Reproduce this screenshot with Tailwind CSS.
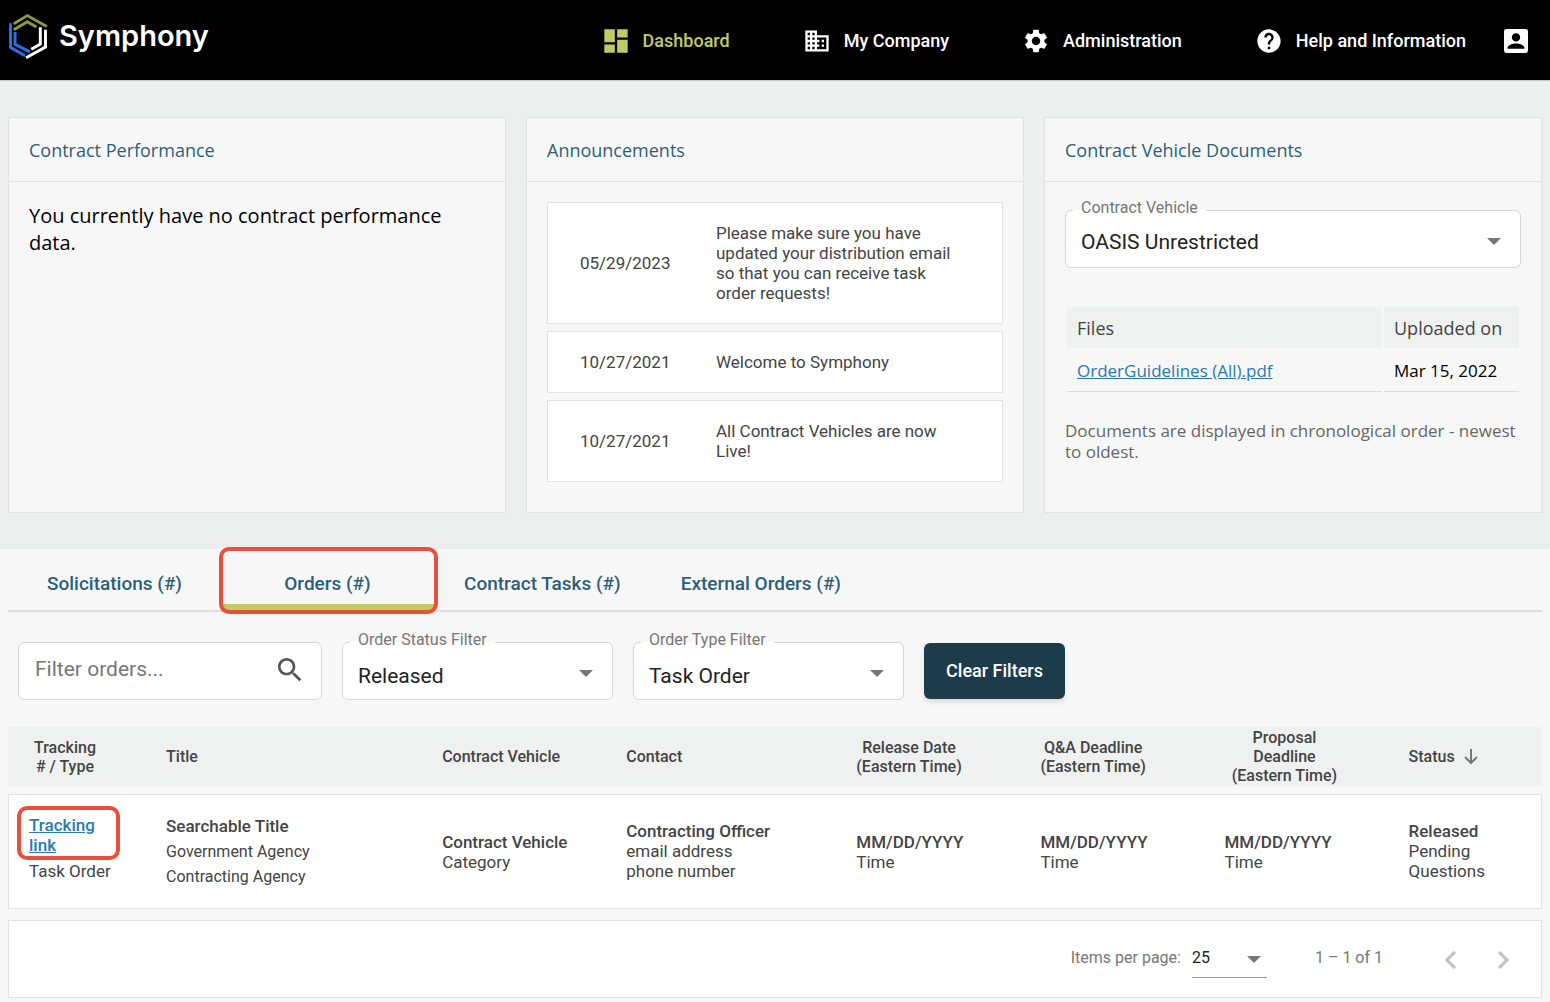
<!DOCTYPE html>
<html lang="en">
<head>
  <meta charset="UTF-8" />
  <meta name="viewport" content="width=device-width, initial-scale=1.0" />
  <title>Symphony — Dashboard</title>
  <script src="https://cdn.jsdelivr.net/npm/@tailwindcss/browser@4"></script>
</head>
<body class="bg-[#f7f7f7] text-[#444] font-['Roboto',sans-serif] text-base leading-5 min-h-screen">

  <header class="bg-black text-white h-[81px] border-b border-[#c4c4c4] flex items-center justify-between pl-2 pr-[22px]">
    <a href="#" class="flex items-center gap-[11px] -mt-2">
      <svg class="w-10 h-[46px]" viewBox="22 40 120 142" fill="none" stroke-width="9">
        <path stroke="#8a9a3c" d="M38 73 80 48l60 34M38 92l42-25 28 16" />
        <path stroke="#2671e8" d="M28 72v74l45 26M42 99v38l46 23" />
        <path stroke="#fff" d="M136 92v53l-60 33M120 84v52l-28 16" />
      </svg>
      <span class="font-['Inter',sans-serif] font-semibold text-[29px] leading-8">Symphony</span>
    </a>
    <nav class="flex items-center pt-[2px] text-lg font-medium">
      <a href="#" class="flex items-center gap-[13px] text-[#c1cb66] mr-[73px]">
        <svg class="size-7" viewBox="0 0 24 24" fill="currentColor"><path d="M2 2h9v11H2zM13 2h9v7h-9zM13 11h9v11h-9zM2 15h9v7H2z" /></svg>
        Dashboard
      </a>
      <a href="#" class="flex items-center gap-[13px] mr-[73px]">
        <svg class="size-7" viewBox="0 0 24 24" fill="currentColor"><path d="M12 7V3H2v18h20V7H12zM6 19H4v-2h2v2zm0-4H4v-2h2v2zm0-4H4V9h2v2zm0-4H4V5h2v2zm4 12H8v-2h2v2zm0-4H8v-2h2v2zm0-4H8V9h2v2zm0-4H8V5h2v2zm10 12h-8v-2h2v-2h-2v-2h2v-2h-2V9h8v10zm-2-8h-2v2h2v-2zm0 4h-2v2h2v-2z" /></svg>
        My Company
      </a>
      <a href="#" class="flex items-center gap-[13px] mr-[73px]">
        <svg class="size-7" viewBox="0 0 24 24" fill="currentColor"><path d="M19.14 12.94c.04-.3.06-.61.06-.94 0-.32-.02-.64-.07-.94l2.03-1.58c.18-.14.23-.41.12-.61l-1.92-3.32c-.12-.22-.37-.29-.59-.22l-2.39.96c-.5-.38-1.03-.7-1.62-.94l-.36-2.54c-.04-.24-.24-.41-.48-.41h-3.84c-.24 0-.43.17-.47.41l-.36 2.54c-.59.24-1.13.57-1.62.94l-2.39-.96c-.22-.08-.47 0-.59.22L2.74 8.87c-.12.21-.08.47.12.61l2.03 1.58c-.05.3-.09.63-.09.94s.02.64.07.94l-2.03 1.58c-.18.14-.23.41-.12.61l1.92 3.32c.12.22.37.29.59.22l2.39-.96c.5.38 1.03.7 1.62.94l.36 2.54c.05.24.24.41.48.41h3.84c.24 0 .44-.17.47-.41l.36-2.54c.59-.24 1.13-.56 1.62-.94l2.39.96c.22.08.47 0 .59-.22l1.92-3.32c.12-.22.07-.47-.12-.61l-2.01-1.58zM12 15.6c-1.98 0-3.6-1.62-3.6-3.6s1.62-3.6 3.6-3.6 3.6 1.62 3.6 3.6-1.62 3.6-3.6 3.6z" /></svg>
        Administration
      </a>
      <a href="#" class="flex items-center gap-[13px] mr-[38px]">
        <svg class="size-7" viewBox="0 0 24 24" fill="currentColor"><path d="M12 2C6.48 2 2 6.48 2 12s4.48 10 10 10 10-4.480 10-10S17.520 2 12 2zm1 17h-2v-2h2v2zm2.070-7.750-.9.920C13.450 12.900 13 13.500 13 15h-2v-.5c0-1.100.45-2.100 1.170-2.830l1.240-1.260c.37-.36.59-.86.59-1.410 0-1.100-.9-2-2-2s-2 .9-2 2H8c0-2.210 1.790-4 4-4s4 1.790 4 4c0 .88-.36 1.680-.93 2.250z" /></svg>
        Help and Information
      </a>
      <button type="button" aria-label="Account">
        <svg class="size-6" viewBox="2 2 20 20" fill="currentColor"><path fill-rule="evenodd" d="M4 2h16a2 2 0 0 1 2 2v16a2 2 0 0 1-2 2H4a2 2 0 0 1-2-2V4a2 2 0 0 1 2-2zm8 3.500a3.500 3.500 0 1 0 0 7 3.500 3.500 0 0 0 0-7zM5 18.500h14v-1c0-2.300-4.700-3.500-7-3.500s-7 1.200-7 3.500z" /></svg>
      </button>
    </nav>
  </header>

  <section class="bg-[#edefee] px-2 py-9 grid grid-cols-3 gap-5">
    <article class="bg-[#f7f7f7] border border-[#e2e2e2] font-['Open_Sans',sans-serif] min-h-[396px]">
      <h2 class="h-16 px-5 flex items-center border-b border-[#e2e2e2] text-lg text-[#2f5f78]">Contract Performance</h2>
      <p class="p-5 text-xl leading-[27px] text-black">You currently have no contract performance data.</p>
    </article>

    <article class="bg-[#f7f7f7] border border-[#e2e2e2]">
      <h2 class="h-16 px-5 flex items-center border-b border-[#e2e2e2] text-lg text-[#2f5f78] font-['Open_Sans',sans-serif]">Announcements</h2>
      <ul class="p-5 flex flex-col gap-[7px] text-[17px]">
        <li class="bg-white border border-[#e2e2e2] grid grid-cols-[136px_1fr] items-center py-5 pl-8 pr-9"><time>05/29/2023</time><p>Please make sure you have updated your distribution email so that you can receive task order requests!</p></li>
        <li class="bg-white border border-[#e2e2e2] grid grid-cols-[136px_1fr] items-center py-5 pl-8 pr-9"><time>10/27/2021</time><p>Welcome to Symphony</p></li>
        <li class="bg-white border border-[#e2e2e2] grid grid-cols-[136px_1fr] items-center py-5 pl-8 pr-9"><time>10/27/2021</time><p>All Contract Vehicles are now Live!</p></li>
      </ul>
    </article>

    <article class="bg-[#f7f7f7] border border-[#e2e2e2] font-['Open_Sans',sans-serif]">
      <h2 class="h-16 px-5 flex items-center border-b border-[#e2e2e2] text-lg text-[#2f5f78]">Contract Vehicle Documents</h2>
      <div class="px-5 pt-7">
        <div class="relative font-['Roboto',sans-serif]">
          <label for="vehicle" class="absolute left-2 -top-[10px] px-2 text-base leading-4 text-[#777] bg-linear-to-b from-[#f7f7f7] from-65% to-white to-65%">Contract Vehicle</label>
          <select id="vehicle" class="appearance-none w-full h-[58px] rounded-md border border-[#d6d6d6] bg-white pl-[15px] pt-[6px] text-[21px] text-[#222]"><option>OASIS Unrestricted</option></select>
          <svg class="absolute right-5 top-7 w-[14px] h-[7px] pointer-events-none" viewBox="0 0 14 7" fill="#777"><path d="M0 0h14L7 7z" /></svg>
        </div>
        <table class="w-full mt-[37px] border-separate border-spacing-[2px] text-left">
          <thead>
            <tr class="bg-[#eff1f0] text-lg text-[#444]">
              <th class="h-[41px] px-[10px] font-normal">Files</th>
              <th class="w-[135px] px-[10px] font-normal">Uploaded on</th>
            </tr>
          </thead>
          <tbody>
            <tr class="text-[17px]">
              <td class="h-[42px] px-[10px] border-b border-[#dcdcdc]"><a href="#" class="text-[#2a7ab0] underline">OrderGuidelines (All).pdf</a></td>
              <td class="px-[10px] border-b border-[#dcdcdc] text-black">Mar 15, 2022</td>
            </tr>
          </tbody>
        </table>
        <p class="mt-[26px] text-[17px] leading-[21px] text-[#666]">Documents are displayed in chronological order - newest to oldest.</p>
      </div>
    </article>
  </section>

  <main class="px-2">
    <div role="tablist" class="flex border-b-2 border-[#dfdfdf] text-[19px] font-medium text-[#2f5f78]">
      <button type="button" role="tab" class="min-w-[213px] h-[61px] px-[30px] pt-2">Solicitations (#)</button>
      <div class="relative">
        <button type="button" role="tab" aria-selected="true" class="min-w-[213px] h-[61px] px-[30px] pt-[14px] border-b-6 border-[#c1cb66]">Orders (#)</button>
        <div class="absolute -left-[2px] -right-1 -top-[2px] -bottom-1 border-4 border-[#e8503d] rounded-[10px] pointer-events-none"></div>
      </div>
      <button type="button" role="tab" class="h-[61px] px-[30px] pt-2">Contract Tasks (#)</button>
      <button type="button" role="tab" class="h-[61px] px-[30px] pt-2">External Orders (#)</button>
    </div>

    <form class="flex gap-5 pl-[10px] pt-[30px]">
      <div class="relative">
        <input aria-label="Filter orders" type="text" placeholder="Filter orders..." class="w-[304px] h-[58px] rounded-md border border-[#d6d6d6] bg-white pl-4 pr-14 pb-1 text-[21px] placeholder:text-[#777]" />
        <svg class="absolute right-4 top-3 size-8 pointer-events-none" viewBox="0 0 24 24" fill="#555"><path d="M15.500 14h-.79l-.28-.27C15.410 12.590 16 11.110 16 9.500 16 5.910 13.090 3 9.500 3S3 5.910 3 9.500 5.910 16 9.500 16c1.610 0 3.090-.59 4.230-1.570l.27.28v.79l5 4.990L20.490 19l-4.990-5zm-6 0C7.010 14 5 11.990 5 9.500S7.010 5 9.500 5 14 7.010 14 9.500 11.990 14 9.500 14z" /></svg>
      </div>
      <div class="relative">
        <label for="status" class="absolute left-2 -top-[10px] px-2 text-base leading-4 text-[#777] bg-linear-to-b from-[#f7f7f7] from-65% to-white to-65%">Order Status Filter</label>
        <select id="status" class="appearance-none w-[271px] h-[58px] rounded-md border border-[#d6d6d6] bg-white pl-[15px] pt-[10px] text-[21px] text-[#222]"><option>Released</option></select>
        <svg class="absolute right-5 top-7 w-[14px] h-[7px] pointer-events-none" viewBox="0 0 14 7" fill="#777"><path d="M0 0h14L7 7z" /></svg>
      </div>
      <div class="relative">
        <label for="type" class="absolute left-2 -top-[10px] px-2 text-base leading-4 text-[#777] bg-linear-to-b from-[#f7f7f7] from-65% to-white to-65%">Order Type Filter</label>
        <select id="type" class="appearance-none w-[271px] h-[58px] rounded-md border border-[#d6d6d6] bg-white pl-[15px] pt-[10px] text-[21px] text-[#222]"><option>Task Order</option></select>
        <svg class="absolute right-5 top-7 w-[14px] h-[7px] pointer-events-none" viewBox="0 0 14 7" fill="#777"><path d="M0 0h14L7 7z" /></svg>
      </div>
      <button type="button" class="w-[141px] h-14 mt-px rounded-md bg-[#1c3c4b] text-white text-lg font-medium shadow-md">Clear Filters</button>
    </form>

    <table class="w-full mt-[19px] table-fixed border-separate border-spacing-x-0 border-spacing-y-2 text-left">
      <thead>
        <tr class="bg-[#eff1f0] text-base leading-[19px] text-[#444]">
          <th class="w-[9%] h-[59px] pl-5 font-medium"><button type="button" class="w-[74px]">Tracking<br># / Type</button></th>
          <th class="w-[18%] pl-5 font-medium"><button type="button">Title</button></th>
          <th class="w-[12%] pl-5 font-medium"><button type="button">Contract Vehicle</button></th>
          <th class="w-[15%] pl-5 font-medium"><button type="button">Contact</button></th>
          <th class="w-[12%] pl-5 font-medium"><button type="button">Release Date<br>(Eastern Time)</button></th>
          <th class="w-[12%] pl-5 font-medium"><button type="button">Q&amp;A Deadline<br>(Eastern Time)</button></th>
          <th class="w-[12%] pl-5 font-medium"><button type="button" class="w-[120px]">Proposal<br>Deadline<br>(Eastern Time)</button></th>
          <th class="w-[10%] pl-5 font-medium"><button type="button" class="flex items-center gap-[9px]">Status <svg class="w-[14px] h-4" viewBox="0 0 14 16" fill="none" stroke="#777" stroke-width="2"><path d="M7 0v14M1 8l6 6 6-6" /></svg></button></th>
        </tr>
      </thead>
      <tbody>
        <tr class="bg-white text-[17px]">
          <td class="h-[115px] pl-5 pb-2 border-y border-l border-[#e2e2e2]">
            <div class="relative w-20">
              <a href="#" class="block w-[70px] font-medium text-[#2a7ab0] underline">Tracking link</a>
              <div class="absolute -left-3 -top-[9px] w-[103px] h-[54px] border-4 border-[#e8503d] rounded-[10px] pointer-events-none"></div>
            </div>
            <p class="mt-[6px]">Task Order</p>
          </td>
          <td class="pl-5 border-y border-[#e2e2e2]">
            <p class="font-medium">Searchable Title</p>
            <p class="mt-[6px] text-base leading-5">Government Agency</p>
            <p class="mt-[5px] text-base leading-5">Contracting Agency</p>
          </td>
          <td class="pl-5 border-y border-[#e2e2e2]"><span class="font-medium">Contract Vehicle</span><br>Category</td>
          <td class="pl-5 pb-[2px] border-y border-[#e2e2e2]"><span class="font-medium">Contracting Officer</span><br>email address<br>phone number</td>
          <td class="pl-5 border-y border-[#e2e2e2]"><span class="font-medium">MM/DD/YYYY</span><br>Time</td>
          <td class="pl-5 border-y border-[#e2e2e2]"><span class="font-medium">MM/DD/YYYY</span><br>Time</td>
          <td class="pl-5 border-y border-[#e2e2e2]"><span class="font-medium">MM/DD/YYYY</span><br>Time</td>
          <td class="pl-5 pb-[2px] border-y border-r border-[#e2e2e2]"><span class="font-medium">Released</span><br>Pending<br>Questions</td>
        </tr>
      </tbody>
    </table>

    <div class="mt-[3px] mb-1 h-[78px] bg-white border border-[#e2e2e2] flex items-center justify-end pr-7 pt-[2px] text-base text-[#777]">
      <label for="perPage" class="mr-[11px] -mt-1">Items per page:</label>
      <div class="relative mr-12">
        <select id="perPage" class="appearance-none w-[75px] h-9 pb-1 border-b border-[#999] text-[#222] text-base"><option>25</option></select>
        <svg class="absolute right-[6px] top-[14px] w-[14px] h-[7px] pointer-events-none" viewBox="0 0 14 7" fill="#777"><path d="M0 0h14L7 7z" /></svg>
      </div>
      <span class="mr-[58px] -mt-1">1 – 1 of 1</span>
      <button type="button" aria-label="Previous page" class="mr-9"><svg class="size-[18px]" viewBox="0 0 18 18" fill="none" stroke="#c0c0c0" stroke-width="3"><path d="M14 1 6 9l8 8" /></svg></button>
      <button type="button" aria-label="Next page"><svg class="size-[18px]" viewBox="0 0 18 18" fill="none" stroke="#c0c0c0" stroke-width="3"><path d="m4 1 8 8-8 8" /></svg></button>
    </div>
  </main>
</body>
</html>
